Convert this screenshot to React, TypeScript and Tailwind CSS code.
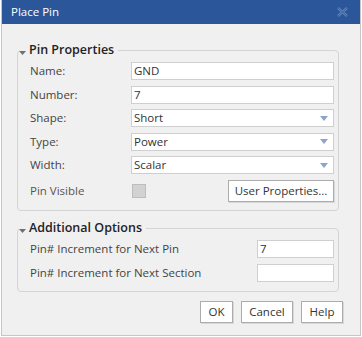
/* ─── Place Pin dialog ─── */

const FONT = "font-['Open_Sans','Liberation_Sans',sans-serif]";

function Caret() {
  return (
    <svg width="8" height="5" viewBox="0 0 8 5" className="shrink-0">
      <path d="M0 0h8L4 5z" fill="#8ea5c9" />
    </svg>
  );
}

function GroupArrow() {
  return (
    <svg width="7" height="5" viewBox="0 0 7 5" className="mt-[9px] shrink-0">
      <path d="M0 0h7L3.5 4z" fill="#707070" />
    </svg>
  );
}

function TextBox({ value = "", w = "w-full" }: { value?: string; w?: string }) {
  return (
    <div className={`flex h-[18px] ${w} items-center border border-[#cfcfcf] bg-white pl-[2px] text-[11.5px] leading-none text-[#333]`}>
      {value}
    </div>
  );
}

function Select({ value }: { value: string }) {
  return (
    <div className="flex h-[18px] w-full items-center justify-between border border-[#cfcfcf] bg-white pl-[2px] pr-[5px] text-[11.5px] leading-none text-[#333]">
      <span>{value}</span>
      <Caret />
    </div>
  );
}

function Btn({ label, w }: { label: string; w: string }) {
  return (
    <button className={`flex h-[22px] ${w} items-center justify-center border border-[#acacac] bg-white text-[11.5px] leading-none text-[#333] shadow-[1px_1px_0_#d8d8d8]`}>
      {label}
    </button>
  );
}

const ROWS: { label: string; value: string; select?: boolean }[] = [
  { label: "Name:", value: "GND" },
  { label: "Number:", value: "7" },
  { label: "Shape:", value: "Short", select: true },
  { label: "Type:", value: "Power", select: true },
  { label: "Width:", value: "Scalar", select: true },
];

export default function App() {
  return (
    <div className={`h-[337px] w-[362px] bg-white ${FONT}`}>
      <div className="ml-[1px] flex h-[336px] w-[360px] flex-col border-x border-b border-[#c6c6c6] bg-[#f0f0f0]">
        {/* title bar */}
        <div className="flex h-[24px] shrink-0 items-center justify-between bg-[#2b579a] pl-[9px] pr-[12px]">
          <span className="text-[11.5px] text-white">Place Pin</span>
          <svg width="11" height="10" viewBox="0 0 11 10">
            <path d="M1 1l9 8M10 1l-9 8" stroke="#5f82b8" strokeWidth="2.6" />
            <path d="M1 1l9 8M10 1l-9 8" stroke="#3d65a4" strokeWidth="1" />
          </svg>
        </div>

        {/* Pin Properties */}
        <fieldset className="ml-[15px] mr-[21px] mt-[18px] rounded-[4px] border border-[#d4d4d4] pb-[8px] pl-[12px] pr-[4px]">
          <legend className="-ml-[11px] flex items-start gap-[3px] pr-[4px]">
            <GroupArrow />
            <span className="text-[12.5px] font-semibold leading-[16px] text-[#222]">Pin Properties</span>
          </legend>
          <div className="mt-[4px] flex flex-col gap-[5.5px]">
            {ROWS.map((r) => (
              <div key={r.label} className="flex h-[18px] items-center">
                <span className="w-[101px] shrink-0 text-[11.5px] text-[#444]">{r.label}</span>
                {r.select ? <Select value={r.value} /> : <TextBox value={r.value} />}
              </div>
            ))}
          </div>
          <div className="mt-[6px] flex h-[22px] items-center">
            <span className="w-[102px] shrink-0 text-[11.5px] text-[#555]">Pin Visible</span>
            <div className="h-[14px] w-[14px] border border-[#bdbdbd] bg-[#d2d2d2]" />
            <div className="ml-auto">
              <Btn label="User Properties..." w="w-[106px]" />
            </div>
          </div>
        </fieldset>

        {/* Additional Options */}
        <fieldset className="ml-[15px] mr-[21px] mt-[9px] rounded-[4px] border border-[#d4d4d4] pb-[9px] pl-[12px] pr-[4px]">
          <legend className="-ml-[11px] flex items-start gap-[3px] pr-[4px]">
            <GroupArrow />
            <span className="text-[12.5px] font-semibold leading-[16px] text-[#222]">Additional Options</span>
          </legend>
          <div className="mt-[4px] flex flex-col gap-[6px]">
            <div className="flex h-[18px] items-center justify-between">
              <span className="text-[11.5px] text-[#444]">Pin# Increment for Next Pin</span>
              <TextBox value="7" w="w-[77px]" />
            </div>
            <div className="flex h-[18px] items-center justify-between">
              <span className="text-[11.5px] text-[#444]">Pin# Increment for Next Section</span>
              <TextBox w="w-[77px]" />
            </div>
          </div>
        </fieldset>

        {/* footer buttons */}
        <div className="mr-[17px] mt-[9px] flex justify-end gap-[8px]">
          <Btn label="OK" w="w-[33px]" />
          <Btn label="Cancel" w="w-[52px]" />
          <Btn label="Help" w="w-[42px]" />
        </div>
      </div>
    </div>
  );
}
